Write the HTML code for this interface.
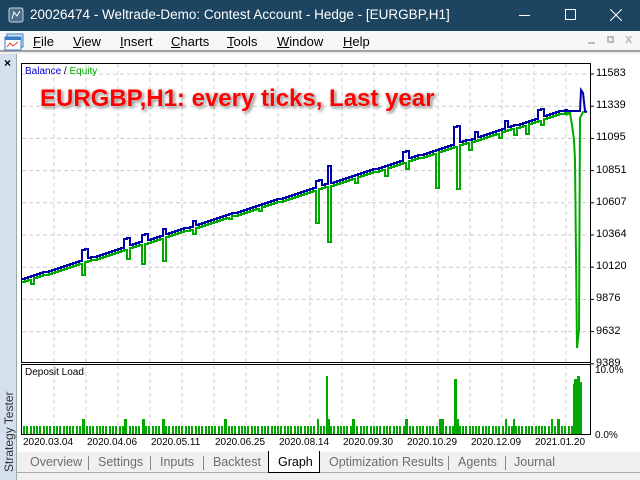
<!DOCTYPE html>
<html><head><meta charset="utf-8"><style>
*{margin:0;padding:0;box-sizing:border-box}
body{width:640px;height:480px;overflow:hidden;background:#f0f0f0;font-family:"Liberation Sans",sans-serif;position:relative}
.tb{position:absolute;left:0;top:0;width:640px;height:31px;background:#1d4460;color:#fff;font-size:13.5px}
.menu{position:absolute;top:31px;left:0;width:640px;height:21px;background:#f7f7f7;font-size:13px;border-bottom:2px solid #a0a0a0}
.menu span{position:absolute;top:3px}
.side{position:absolute;left:0;top:54px;width:17px;height:426px;background:#d4e0ec;border-right:1px solid #9aa}
.main{position:absolute;left:17px;top:54px;width:623px;height:398px;background:#fff}
.tabs{position:absolute;left:17px;top:452px;width:623px;height:21px;background:#f0f0f0;font-size:12.5px;color:#6d6d6d;border-bottom:1px solid #aaa}
.tabs span{position:absolute;top:3px}
.sep{position:absolute;top:4px;width:1px;height:14px;background:#888}
.lbl{position:absolute;font-size:11px;color:#000}
</style></head><body>
<div class="tb">
<svg style="position:absolute;left:8px;top:7px" width="16" height="16"><rect x="1" y="1" width="14" height="14" rx="2" fill="#4c6f8a" stroke="#c8d6e2"/><path d="M4 12 L6 5 L9 9 L12 4" stroke="#fff" fill="none"/></svg>
<span style="position:absolute;left:30px;top:7px">20026474 - Weltrade-Demo: Contest Account - Hedge - [EURGBP,H1]</span>
<div style="position:absolute;left:519px;top:15px;width:11px;height:1px;background:#fff"></div>
<div style="position:absolute;left:565px;top:9px;width:11px;height:11px;border:1px solid #fff"></div>
<svg style="position:absolute;left:610px;top:9px" width="12" height="12"><path d="M0 0L12 12M12 0L0 12" stroke="#fff"/></svg>
</div>
<div class="menu">
<svg style="position:absolute;left:4px;top:2px" width="20" height="18"><rect x="3" y="1" width="16" height="13" fill="#cfe3f7" stroke="#3a7cc5"/><rect x="1" y="4" width="16" height="13" fill="#fff" stroke="#3a7cc5"/><rect x="1" y="4" width="16" height="3" fill="#3a7cc5"/><path d="M3 14L6 10L9 13L14 9" stroke="#e33" fill="none"/></svg>
<span style="left:33px"><u>F</u>ile</span><span style="left:73px"><u>V</u>iew</span><span style="left:120px"><u>I</u>nsert</span><span style="left:171px"><u>C</u>harts</span><span style="left:227px"><u>T</u>ools</span><span style="left:277px"><u>W</u>indow</span><span style="left:343px"><u>H</u>elp</span>
<div style="position:absolute;left:588px;top:11px;width:7px;height:2px;background:#bbb"></div>
<div style="position:absolute;left:607px;top:5px;width:7px;height:7px;border:2px solid #bbb"></div>
<span style="left:625px;top:0;color:#bbb;font-weight:bold">x</span>
</div>
<div class="side">
<div style="position:absolute;left:4px;top:2px;font-size:12px;font-weight:bold">×</div>
</div>
<svg style="position:absolute;left:0;top:370px" width="17" height="105"><text x="0" y="0" transform="translate(13,102) rotate(-90)" font-family="Liberation Sans" font-size="12" fill="#333">Strategy Tester</text></svg>
<div class="main"></div>
<svg id="ch" style="position:absolute;left:0;top:0" width="640" height="480"></svg>
<div class="lbl" style="left:25px;top:66px;font-size:10px"><span style="color:#00c">Balance</span> / <span style="color:#0a0">Equity</span></div>
<div style="position:absolute;left:40px;top:85px;font-size:24px;font-weight:bold;color:#f00;text-shadow:0 0 2px #fff,1px 1px 3px #888,2px 2px 3px #aaa;white-space:nowrap">EURGBP,H1: every ticks, Last year</div>
<div class="lbl" style="left:25px;top:367px;font-size:10px">Deposit Load</div>
<div class="lbl" style="left:595px;top:365px;font-size:10px">10.0%</div>
<div class="lbl" style="left:595px;top:430px;font-size:10px">0.0%</div>
<div id="ax"></div>
<div class="tabs">
<span style="left:13px">Overview</span><div class="sep" style="left:71px"></div>
<span style="left:81px">Settings</span><div class="sep" style="left:133px"></div>
<span style="left:143px">Inputs</span><div class="sep" style="left:186px"></div>
<span style="left:196px">Backtest</span>
<div style="position:absolute;left:251px;top:-1px;width:52px;height:22px;background:#fff;border:1px solid #000;border-top:none"></div>
<span style="left:261px;color:#000">Graph</span>
<span style="left:312px">Optimization Results</span><div class="sep" style="left:431px"></div>
<span style="left:441px">Agents</span><div class="sep" style="left:488px"></div>
<span style="left:497px">Journal</span>
</div>
<script>
var s='';
s+='<rect x="21.5" y="63.5" width="569" height="299" fill="#fff" stroke="#000"/>';
s+='<rect x="21.5" y="364.5" width="569" height="70" fill="#fff" stroke="#000"/>';
for(var x=54;x<590;x+=32){s+='<line x1="'+x+'" y1="64" x2="'+x+'" y2="362" stroke="#ccc" stroke-dasharray="4,3"/>';s+='<line x1="'+x+'" y1="365" x2="'+x+'" y2="434" stroke="#ccc" stroke-dasharray="4,3"/>';}
var labs=['11583','11339','11095','10851','10607','10364','10120','9876','9632','9389'];
var ax='';
for(var i=0;i<10;i++){var y=74+i*32.2;if(i<9)s+='<line x1="22" y1="'+y+'" x2="590" y2="'+y+'" stroke="#ccc" stroke-dasharray="4,3"/>';s+='<line x1="590" y1="'+y+'" x2="594" y2="'+y+'" stroke="#000"/>';ax+='<div class="lbl" style="left:596px;top:'+(y-7)+'px;font-size:11px">'+labs[i]+'</div>';}
var d=['2020.03.04','2020.04.06','2020.05.11','2020.06.25','2020.08.14','2020.09.30','2020.10.29','2020.12.09','2021.01.20'];
for(i=0;i<9;i++){ax+='<div class="lbl" style="left:'+(23+i*64)+'px;top:437px;font-size:10px">'+d[i]+'</div>';}
document.getElementById('ax').innerHTML=ax;
function base(x){return 279-(x-22)*0.312;}
var big={83:10,126:8,143:7,163:6,193:5,318:6,328:18,405:8,455:17,475:6,505:7,540:8};
var gsp={30:8,83:15,126:13,143:22,163:26,193:8,230:5,260:6,316:36,328:58,355:8,385:10,405:10,437:38,456:46,470:10,500:8,515:10,525:12,540:8};
var bp=[],gp=[];
for(x=22;x<=566;x+=3){var b=Math.round(base(x));var bb=b;for(var k in big){if(Math.abs(x-k)<3)bb=b-big[k];}
bp.push(x+','+bb);bp.push((x+3)+','+bb);
var g=b+3;for(var k in gsp){if(Math.abs(x-k)<2)g=b+gsp[k];}
if(x%9==0)g+=3;
gp.push(x+','+g);gp.push((x+3)+','+g);}
bp.push('566,111','580,111','581,90','583,93','585,111','587,112');
gp.push('566,115','570,113','572,125','574,140','575,160','577,348','579,330','580,118','583,112','587,112');
s+='<polyline points="'+gp.join(' ')+'" fill="none" stroke="#00a800" stroke-width="2"/>';
s+='<polyline points="'+bp.join(' ')+'" fill="none" stroke="#0000a8" stroke-width="2"/>';
var tall={83:15,124:15,143:15,163:15,225:15,317:15,326:58,328:15,352:15,405:15,439:15,441:15,454:55,457:15,505:15,513:15,551:15,557:15,573:50,575:55,578:58,580:52};
for(x=23;x<580;x+=3.3){var h=8;var xi=Math.round(x);for(var k in tall){if(Math.abs(xi-k)<2)h=tall[k];}
s+='<rect x="'+xi+'" y="'+(434-h)+'" width="2" height="'+h+'" fill="#00a800"/>';}
for(var k in tall){s+='<rect x="'+k+'" y="'+(434-tall[k])+'" width="2" height="'+tall[k]+'" fill="#00a800"/>';}
document.getElementById('ch').innerHTML=s;
</script>
</body></html>
